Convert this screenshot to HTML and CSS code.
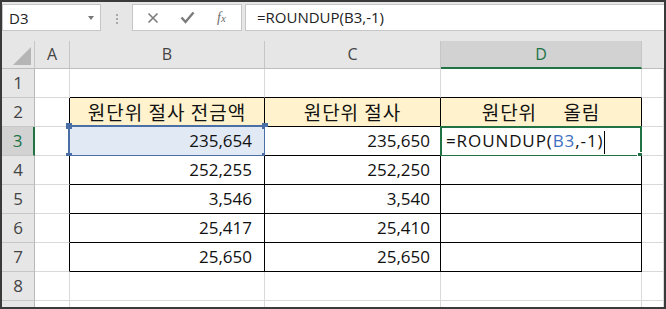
FILE: index.html
```html
<!DOCTYPE html>
<html>
    <head>
        <link rel="stylesheet" href="styles.css">
    </head>
    <body>
        <div class="window">
            <div class="formula-bar">
                <div class="name-box">
                    <span>D3</span>
                    <span class="drop"></span>
                </div>
                <div class="grip"><i></i><i></i><i></i></div>
                <div class="fx-buttons">
                    <svg class="ico" width="12" height="12" viewBox="0 0 12 12"><path d="M1.5 1.5 L10.5 10.5 M10.5 1.5 L1.5 10.5" stroke="#7b7b7b" stroke-width="1.6" fill="none"/></svg>
                    <svg class="ico" width="15" height="13" viewBox="0 0 15 13"><path d="M1.5 6.5 L5.5 11 L13.5 1.5" stroke="#7b7b7b" stroke-width="2.4" fill="none"/></svg>
                    <span class="fx">f<small>x</small></span>
                </div>
                <div class="formula">=ROUNDUP(B3,-1)</div>
            </div>

            <div class="grid">
                <div class="corner"><span></span></div>
                <div class="col-h">A</div>
                <div class="col-h">B</div>
                <div class="col-h">C</div>
                <div class="col-h on">D</div>
                <div class="col-h last"></div>

                <div class="row-h">1</div>
                <div class="c"></div>
                <div class="c top"></div>
                <div class="c top"></div>
                <div class="c top"></div>
                <div class="c"></div>

                <div class="row-h">2</div>
                <div class="c edge"></div>
                <div class="c t head">원단위 절사 전금액</div>
                <div class="c t head">원단위 절사</div>
                <div class="c t head">원단위     올림</div>
                <div class="c"></div>

                <div class="row-h on">3</div>
                <div class="c edge"></div>
                <div class="c t num first ref">235,654<i class="h tl"></i><i class="h tr"></i><i class="h bl"></i><i class="h br"></i></div>
                <div class="c t num">235,650</div>
                <div class="c t active">=ROUNDUP(<span class="ref-txt">B3</span>,-1)<span class="caret"></span><i class="fill"></i></div>
                <div class="c"></div>

                <div class="row-h">4</div>
                <div class="c edge"></div>
                <div class="c t num first">252,255</div>
                <div class="c t num">252,250</div>
                <div class="c t"></div>
                <div class="c"></div>

                <div class="row-h">5</div>
                <div class="c edge"></div>
                <div class="c t num first">3,546</div>
                <div class="c t num">3,540</div>
                <div class="c t"></div>
                <div class="c"></div>

                <div class="row-h">6</div>
                <div class="c edge"></div>
                <div class="c t num first">25,417</div>
                <div class="c t num">25,410</div>
                <div class="c t"></div>
                <div class="c"></div>

                <div class="row-h">7</div>
                <div class="c edge"></div>
                <div class="c t num first">25,650</div>
                <div class="c t num">25,650</div>
                <div class="c t"></div>
                <div class="c"></div>

                <div class="row-h">8</div>
                <div class="c"></div>
                <div class="c"></div>
                <div class="c"></div>
                <div class="c"></div>
                <div class="c"></div>

                <div class="row-h"></div>
                <div class="c"></div>
                <div class="c"></div>
                <div class="c"></div>
                <div class="c"></div>
                <div class="c"></div>
            </div>
        </div>
    </body>
</html>
```

FILE: styles.css
```css
body {
    margin: 0;
}
.window {
    width: 666px;
    height: 309px;
    box-sizing: border-box;
    border: 2px solid #3a3a3a;
    background-color: #e6e6e6;
    overflow: hidden;
    font-family: "Open Sans", "Noto Sans CJK KR", sans-serif;
}
.formula-bar {
    display: flex;
    align-items: flex-start;
    height: 39px;
    padding-top: 2px;
    box-sizing: border-box;
}
.name-box,
.fx-buttons,
.formula {
    height: 27px;
    box-sizing: border-box;
    border: 1px solid #c6c6c6;
    background-color: white;
}
.name-box {
    width: 99px;
    display: flex;
    align-items: center;
    justify-content: space-between;
    padding: 0 6px 0 6px;
    font-size: 15px;
    color: #222;
}
.name-box .drop {
    width: 0;
    height: 0;
    border-left: 3.5px solid transparent;
    border-right: 3.5px solid transparent;
    border-top: 4px solid #777;
}
.grip {
    width: 31px;
    display: flex;
    flex-direction: column;
    align-items: center;
    gap: 2px;
    padding-top: 10px;
}
.grip i {
    width: 2px;
    height: 2px;
    background-color: #a8a8a8;
}
.fx-buttons {
    width: 110px;
    display: flex;
    align-items: center;
    padding-left: 14px;
    gap: 0;
}
.fx-buttons .ico:nth-child(1) {
    margin-right: 21px;
}
.fx-buttons .ico:nth-child(2) {
    margin-right: 22px;
}
.fx {
    font-family: "Liberation Serif", serif;
    font-style: italic;
    font-size: 14px;
    color: #6c6c6c;
}
.fx small {
    font-size: 11px;
}
.formula {
    flex: 1;
    margin-left: 3px;
    border-right: none;
    padding-left: 11px;
    font-size: 15px;
    line-height: 25px;
    color: #222;
}
.grid {
    display: grid;
    grid-template-columns: 33px 35px 195px 176px 201px 1fr;
    grid-template-rows: 28px repeat(9, 29px);
}
.grid > div {
    box-sizing: border-box;
}
.corner {
    border-right: 1px solid #c6c6c6;
    border-bottom: 1px solid #bcbcbc;
    position: relative;
}
.corner span {
    position: absolute;
    right: 3px;
    bottom: 3px;
    width: 0;
    height: 0;
    border-left: 18px solid transparent;
    border-bottom: 18px solid #b5b5b5;
}
.col-h {
    border-right: 1px solid #c6c6c6;
    border-bottom: 1px solid #bcbcbc;
    text-align: center;
    font-size: 16px;
    line-height: 27px;
    color: #444;
}
.col-h.on {
    background-color: #d2d2d2;
    border-bottom: 2px solid #217346;
    color: #217346;
    line-height: 26px;
}
.col-h.last {
    border-right: none;
}
.row-h {
    border-right: 1px solid #b8b8b8;
    border-bottom: 1px solid #c6c6c6;
    text-align: center;
    font-size: 17px;
    line-height: 28px;
    color: #444;
}
.row-h.on {
    background-color: #d2d2d2;
    border-right: 2px solid #217346;
    color: #217346;
}
.c {
    background-color: white;
    border-right: 1px solid #d9d9d9;
    border-bottom: 1px solid #d9d9d9;
    font-size: 17px;
    line-height: 28px;
    color: #111;
    position: relative;
    white-space: pre;
}
.c.top {
    border-bottom-color: black;
}
.c.edge {
    border-right-color: black;
}
.c.t {
    border-right-color: black;
    border-bottom-color: black;
}
.c.head {
    background-color: #fff2cc;
    text-align: center;
    font-family: "Noto Sans CJK KR", sans-serif;
    font-size: 19px;
    letter-spacing: 1px;
    line-height: 27px;
}
.c.num {
    text-align: right;
    padding-right: 10px;
}
.c.num.first {
    padding-right: 12px;
}
.c.ref {
    background-color: #e1e9f5;
}
.c.ref::before {
    content: "";
    position: absolute;
    left: -2px;
    top: -2px;
    right: -2px;
    bottom: -2px;
    border: 2px solid #4a6fa6;
}
.h {
    position: absolute;
    width: 6px;
    height: 6px;
    background-color: #4a6fa6;
}
.h.tl { left: -4px; top: -4px; }
.h.tr { right: -4px; top: -4px; }
.h.bl { left: -4px; bottom: -4px; }
.h.br { right: -4px; bottom: -4px; }
.c.active {
    padding-left: 5px;
    letter-spacing: 0.9px;
}
.c.active::before {
    content: "";
    position: absolute;
    left: -1px;
    top: -1px;
    right: -1px;
    bottom: -2px;
    border: 2px solid #217346;
}
.ref-txt {
    color: #3f6fc0;
}
.caret {
    display: inline-block;
    width: 1px;
    height: 23px;
    margin-left: 1px;
    background-color: black;
    vertical-align: middle;
}
.fill {
    position: absolute;
    right: -3px;
    bottom: -4px;
    width: 5px;
    height: 5px;
    background-color: #217346;
    border: 1px solid white;
}
```
